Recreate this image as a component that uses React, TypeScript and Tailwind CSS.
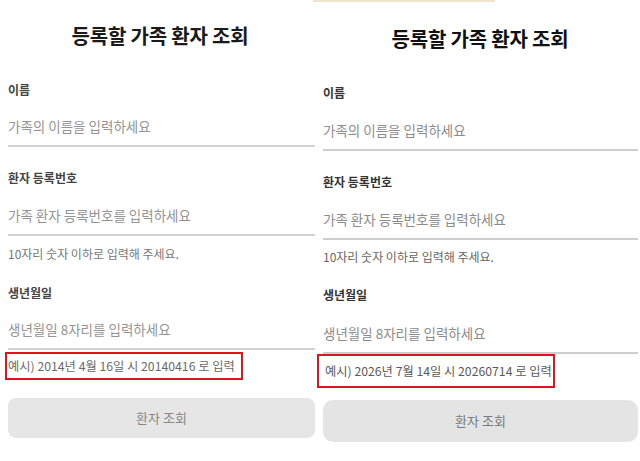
import React from "react";

const font = { fontFamily: '"Noto Sans CJK KR", "Noto Sans", sans-serif' };

function LeftPanel() {
  return (
    <div className="w-[320px] flex flex-col pl-[8px] pr-[5px]">
      <div className="h-[72px] flex items-center justify-center text-[20px] font-bold tracking-[-0.2px] text-[#1a1a1a] pr-[3px]">
        등록할 가족 환자 조회
      </div>
      <div className="mt-[8px] h-[20px] flex items-center text-[12px] font-bold text-[#444]">이름</div>
      <div className="mt-[7px] h-[40px] flex items-center border-b-2 border-[#d2d2d2] text-[13.5px] text-[#949494]">
        가족의 이름을 입력하세요
      </div>
      <div className="mt-[21px] h-[20px] flex items-center text-[12px] font-bold text-[#444]">환자 등록번호</div>
      <div className="mt-[8px] h-[40px] flex items-center border-b-2 border-[#d2d2d2] text-[13.5px] text-[#949494]">
        가족 환자 등록번호를 입력하세요
      </div>
      <div className="mt-[10px] h-[16px] flex items-center text-[12px] text-[#777]">10자리 숫자 이하로 입력해 주세요.</div>
      <div className="mt-[21px] h-[20px] flex items-center text-[12px] font-bold text-[#444]">생년월일</div>
      <div className="mt-[7px] h-[40px] flex items-center border-b-2 border-[#d2d2d2] text-[13.5px] text-[#949494]">
        생년월일 8자리를 입력하세요
      </div>
      <div className="mt-[2px] -ml-[3px] w-[238px] h-[28px] flex items-center border-2 border-[#e0141c] pl-[1px] text-[12.25px] text-[#6a6a6a] whitespace-nowrap">
        예시) 2014년 4월 16일 시 20140416 로 입력
      </div>
      <div className="mt-[18px] h-[40px] rounded-[8px] bg-[#e6e6e6] flex items-center justify-center text-[13px] text-[#888]">
        환자 조회
      </div>
    </div>
  );
}

function RightPanel() {
  return (
    <div className="w-[320px] flex flex-col pl-[3px] pr-[2px]">
      <div className="-ml-[10px] h-[2px] w-[182px] bg-[#efe4cc]" />
      <div className="h-[74px] flex items-center justify-center text-[20px] font-bold tracking-[-0.2px] text-[#111] pr-[1px]">
        등록할 가족 환자 조회
      </div>
      <div className="mt-[7px] h-[20px] flex items-center text-[12px] font-bold text-[#333]">이름</div>
      <div className="mt-[8px] h-[40px] flex items-center border-b-2 border-[#cdcdcd] text-[13.5px] text-[#8c8c8c]">
        가족의 이름을 입력하세요
      </div>
      <div className="mt-[21px] h-[20px] flex items-center text-[12px] font-bold text-[#333]">환자 등록번호</div>
      <div className="mt-[8px] h-[40px] flex items-center border-b-2 border-[#cdcdcd] text-[13.5px] text-[#8c8c8c]">
        가족 환자 등록번호를 입력하세요
      </div>
      <div className="mt-[9px] h-[16px] flex items-center text-[12px] text-[#666]">10자리 숫자 이하로 입력해 주세요.</div>
      <div className="mt-[20px] h-[20px] flex items-center text-[12px] font-bold text-[#333]">생년월일</div>
      <div className="mt-[9px] h-[40px] flex items-center border-b-2 border-[#cdcdcd] text-[13.5px] text-[#8c8c8c]">
        생년월일 8자리를 입력하세요
      </div>
      <div className="-ml-[6px] w-[238px] h-[34px] flex items-center border-2 border-[#e0141c] pl-[6px] text-[12.25px] text-[#5a5a5a] whitespace-nowrap">
        예시) 2026년 7월 14일 시 20260714 로 입력
      </div>
      <div className="mt-[12px] h-[42px] rounded-[10px] bg-[#e4e4e4] flex items-center justify-center text-[13px] text-[#7a7a7a]">
        환자 조회
      </div>
    </div>
  );
}

export default function App() {
  return (
    <div className="w-[640px] h-[461px] bg-white flex overflow-hidden" style={font}>
      <LeftPanel />
      <RightPanel />
    </div>
  );
}
